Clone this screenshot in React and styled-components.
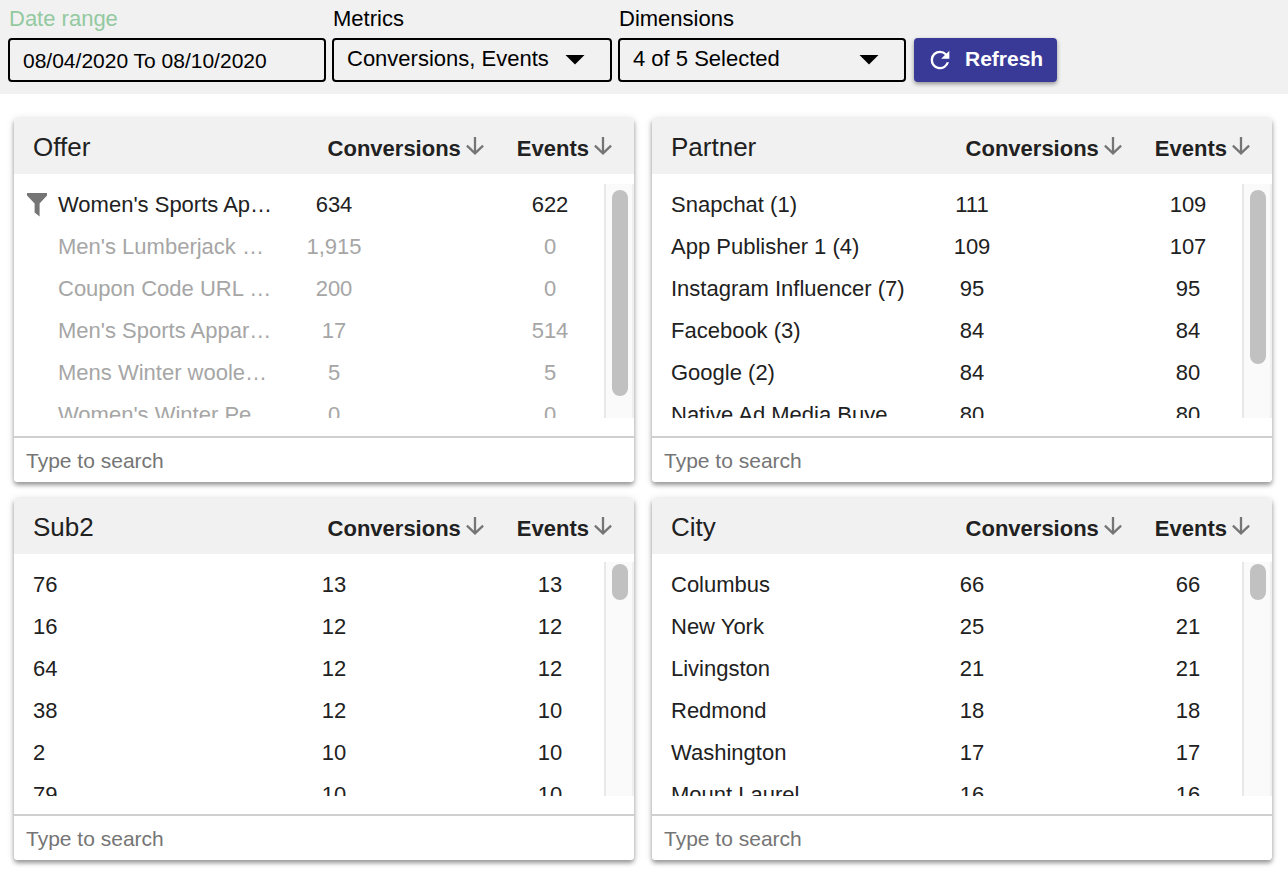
import React from "react";
import styled, { createGlobalStyle } from "styled-components";

const GlobalStyle = createGlobalStyle`
  * { box-sizing: border-box; }
  body {
    margin: 0;
    background: #fff;
    color: #212121;
    font: 22px/26px "Liberation Sans", Arial, sans-serif;
  }
  input, select, button { font-family: inherit; }
`;

const FilterBar = styled.form`
  display: flex;
  align-items: flex-end;
  gap: 6px;
  padding: 6px 8px 12px;
  background: #f1f1f1;
`;

const Field = styled.div`
  display: flex;
  flex-direction: column;
  gap: 6px;
  flex: 0 1 ${(p) => p.$basis}px;
  min-width: 0;
`;

const Label = styled.label`
  padding-left: 1px;
  color: ${(p) => (p.$active ? "#93c9a0" : "#000")};
`;

const DateInput = styled.input`
  width: 100%;
  height: 44px;
  padding: 2px 13px 0;
  border: 2px solid #000;
  border-radius: 4px;
  background: transparent;
  color: #000;
  font-size: 21px;
`;

const SelectBox = styled.div`
  position: relative;
`;

const Select = styled.select`
  appearance: none;
  width: 100%;
  height: 44px;
  padding: 0 48px 4px 13px;
  border: 2px solid #000;
  border-radius: 4px;
  background: transparent;
  color: #000;
  font-size: 22px;
`;

const Caret = styled.svg`
  position: absolute;
  right: 27px;
  top: 17px;
  pointer-events: none;
`;

const RefreshButton = styled.button`
  display: flex;
  align-items: center;
  gap: 11px;
  height: 44px;
  margin-left: 2px;
  padding: 0 14px 2px 12px;
  border: 0;
  border-radius: 4px;
  background: #393a98;
  box-shadow: 0 2px 4px rgba(0, 0, 0, 0.4);
  color: #fff;
  font-size: 21px;
  font-weight: 700;
`;

const RefreshIcon = styled.svg`
  margin-top: 2px;
`;

const Panels = styled.main`
  display: grid;
  grid-template-columns: repeat(2, minmax(0, 1fr));
  gap: 16px 18px;
  padding: 24px 16px 16px 14px;
`;

const Card = styled.section`
  overflow: hidden;
  border-radius: 4px;
  background: #fff;
`;

const CardShadow = styled.div`
  border-radius: 4px;
  box-shadow: 0 3px 4px rgba(0, 0, 0, 0.36), 0 1px 8px rgba(0, 0, 0, 0.12);
`;

const DataArea = styled.div`
  display: grid;
  grid-template-columns: minmax(0, 1fr) 30px;
  grid-template-rows: 56px 234px;
  row-gap: ${(p) => p.$inset}px;
  padding-bottom: 18px;
`;

const Table = styled.table`
  display: grid;
  grid-area: 1 / 1 / 3 / 3;
  grid-template-rows: 56px 234px;
  row-gap: inherit;
`;

const Head = styled.thead`
  display: block;
  background: #f1f1f1;
`;

const HeadRow = styled.tr`
  display: flex;
  align-items: center;
  gap: 32px;
  height: 56px;
  padding: 2px 21px 0 19px;
`;

const Title = styled.th`
  flex: 1;
  padding: 0;
  text-align: left;
  font-size: 26px;
  font-weight: 400;
`;

const SortHead = styled.th`
  padding: 4px 0 0;
`;

const SortButton = styled.button`
  display: flex;
  align-items: center;
  gap: 4px;
  padding: 0;
  border: 0;
  background: none;
  color: #212121;
  font-size: 22px;
  font-weight: 700;
  line-height: 26px;
`;

const SortIcon = styled.svg`
  margin-bottom: 6px;
`;

const Body = styled.tbody`
  display: block;
  height: 234px;
  margin-right: 30px;
  padding-top: ${(p) => 10 - p.$inset}px;
  overflow: hidden;
`;

const Row = styled.tr`
  display: grid;
  grid-template-columns: minmax(0, 1fr) 216px 108px;
  align-items: center;
  height: 42px;
  color: ${(p) => (p.$muted ? "#a6a6a6" : "#212121")};
`;

const Name = styled.td`
  display: flex;
  align-items: center;
  gap: 11px;
  padding: 0 0 0 ${(p) => (p.$filterable ? 13 : 19)}px;
  white-space: nowrap;
`;

const IconSlot = styled.span`
  display: flex;
  flex: 0 0 20px;
`;

const Value = styled.td`
  padding: 0 ${(p) => (p.$wide ? 108 : 0)}px 0 0;
  text-align: center;
`;

const Track = styled.div`
  grid-area: 2 / 2;
  padding: ${(p) => (p.$inset > 8 ? 6 : 2)}px 4px 0 6px;
  border-left: 2px solid #e8e8e8;
  border-right: 2px solid #f0f0f0;
  background: #fafafa;
`;

const Thumb = styled.div`
  width: 16px;
  height: ${(p) => p.$length}px;
  border-radius: 8px;
  background: #c1c1c1;
`;

const Search = styled.input`
  display: block;
  width: 100%;
  height: 46px;
  padding: 2px 12px 0;
  border: 0;
  border-top: 2px solid #d0d0d0;
  background: #fff;
  font-size: 21px;
  &::placeholder { color: #757575; }
`;

const panels = [
  {
    title: "Offer", inset: 10, thumb: 206, filterable: true,
    rows: [
      ["Women's Sports Ap…", "634", "622"],
      ["Men's Lumberjack …", "1,915", "0"],
      ["Coupon Code URL …", "200", "0"],
      ["Men's Sports Appar…", "17", "514"],
      ["Mens Winter woole…", "5", "5"],
      ["Women's Winter Pe…", "0", "0"],
    ],
  },
  {
    title: "Partner", inset: 10, thumb: 174,
    rows: [
      ["Snapchat (1)", "111", "109"],
      ["App Publisher 1 (4)", "109", "107"],
      ["Instagram Influencer (7)", "95", "95"],
      ["Facebook (3)", "84", "84"],
      ["Google (2)", "84", "80"],
      ["Native Ad Media Buye…", "80", "80"],
    ],
  },
  {
    title: "Sub2", inset: 8, thumb: 36,
    rows: [
      ["76", "13", "13"],
      ["16", "12", "12"],
      ["64", "12", "12"],
      ["38", "12", "10"],
      ["2", "10", "10"],
      ["79", "10", "10"],
    ],
  },
  {
    title: "City", inset: 8, thumb: 36,
    rows: [
      ["Columbus", "66", "66"],
      ["New York", "25", "21"],
      ["Livingston", "21", "21"],
      ["Redmond", "18", "18"],
      ["Washington", "17", "17"],
      ["Mount Laurel", "16", "16"],
    ],
  },
];

function SelectField({ id, label, basis, value }) {
  return (
    <Field $basis={basis}>
      <Label htmlFor={id}>{label}</Label>
      <SelectBox>
        <Select id={id} defaultValue={value}>
          <option>{value}</option>
        </Select>
        <Caret width="20" height="10" viewBox="0 0 20 10" aria-hidden="true">
          <path d="M0.5 0H19.5L10 9.5z" fill="#000" />
        </Caret>
      </SelectBox>
    </Field>
  );
}

function SortColumn({ children }) {
  return (
    <SortHead scope="col">
      <SortButton type="button">
        {children}
        <SortIcon width="20" height="20" viewBox="0 0 20 20" aria-hidden="true">
          <path d="M10 1v16.500M1.900 9.700L10 17.300l8.100-7.600" fill="none" stroke="#757575" strokeWidth="2.300" />
        </SortIcon>
      </SortButton>
    </SortHead>
  );
}

function Panel({ title, inset, thumb, filterable, rows }) {
  return (
    <CardShadow>
      <Card aria-label={title}>
        <DataArea $inset={inset}>
          <Table cellSpacing="0">
            <Head>
              <HeadRow>
                <Title scope="col">{title}</Title>
                <SortColumn>Conversions</SortColumn>
                <SortColumn>Events</SortColumn>
              </HeadRow>
            </Head>
            <Body $inset={inset}>
              {rows.map(([name, conversions, events], i) => (
                <Row key={name} $muted={filterable && i > 0}>
                  <Name $filterable={filterable}>
                    {filterable && (
                      <IconSlot>
                        {i === 0 && (
                          <svg width="20" height="26" viewBox="0 0 20 26" aria-hidden="true">
                            <path d="M0 1h20v2.600L12.600 11.500v13L7.600 20.500v-9L0 3.600z" fill="#757575" />
                          </svg>
                        )}
                      </IconSlot>
                    )}
                    {name}
                  </Name>
                  <Value $wide>{conversions}</Value>
                  <Value>{events}</Value>
                </Row>
              ))}
            </Body>
          </Table>
          <Track $inset={inset} aria-hidden="true">
            <Thumb $length={thumb} />
          </Track>
        </DataArea>
        <Search type="text" placeholder="Type to search" aria-label={`Search ${title}`} />
      </Card>
    </CardShadow>
  );
}

export default function App() {
  return (
    <>
      <GlobalStyle />
      <FilterBar onSubmit={(e) => e.preventDefault()}>
        <Field $basis={318}>
          <Label htmlFor="range" $active>Date range</Label>
          <DateInput id="range" type="text" defaultValue="08/04/2020 To 08/10/2020" />
        </Field>
        <SelectField id="metrics" label="Metrics" basis={280} value="Conversions, Events" />
        <SelectField id="dimensions" label="Dimensions" basis={288} value="4 of 5 Selected" />
        <RefreshButton type="submit">
          <RefreshIcon width="28" height="28" viewBox="0 0 24 24" aria-hidden="true">
            <path
              d="M17.650 6.350A7.958 7.958 0 0 0 12 4a8 8 0 1 0 7.730 10h-2.080A5.990 5.990 0 0 1 12 18a6 6 0 1 1 0-12c1.660 0 3.140.690 4.220 1.780L13 11h7V4z"
              fill="#fff"
            />
          </RefreshIcon>
          Refresh
        </RefreshButton>
      </FilterBar>
      <Panels>
        {panels.map((panel) => (
          <Panel key={panel.title} {...panel} />
        ))}
      </Panels>
    </>
  );
}
